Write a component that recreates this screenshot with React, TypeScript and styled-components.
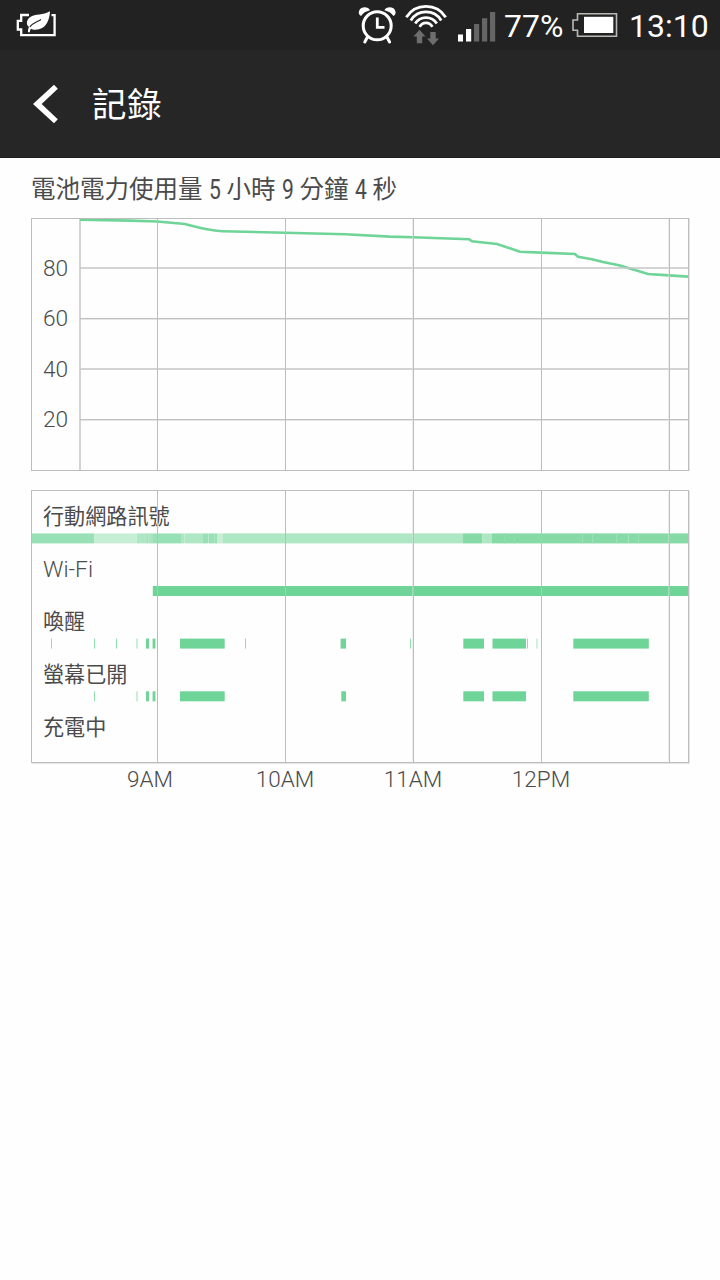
import React from 'react';
import styled, { createGlobalStyle } from 'styled-components';

const GlobalStyle = createGlobalStyle`
  * { box-sizing: border-box; }
  body { margin: 0; background: #fefefe; }
`;

const GREEN = '#6fd497';
const LINE = '#bdbdbd';
const SOFT = '#e4e4e4';

const Screen = styled.div`
  width: 720px;
  height: 1280px;
  display: flex;
  flex-direction: column;
  overflow: hidden;
  background: #fefefe;
  font-family: Roboto, 'Noto Sans CJK TC', sans-serif;
  color: #4b4b4b;
`;

const StatusBar = styled.header`
  height: 50px;
  flex: none;
  display: flex;
  align-items: center;
  padding: 0 13px 0 16px;
  background: #222;
  color: #fff;
`;

const StatusIcon = styled.svg<{ $gap?: number }>`
  display: block;
  flex: none;
  height: 50px;
  margin-right: ${(p) => p.$gap ?? 0}px;
`;

const Spacer = styled.div`
  flex: 1;
`;

const StatusText = styled.span<{ $width: number }>`
  width: ${(p) => p.$width}px;
  font-size: 32px;
  font-weight: 380;
  line-height: 50px;
  padding-top: 1px;
  white-space: nowrap;
`;

const TitleBar = styled.div`
  height: 108px;
  flex: none;
  display: flex;
  align-items: center;
  padding-left: 32px;
  background: #262626;
  border-bottom: 1px solid #1f1f1f;
  color: #fff;
`;

const BackIcon = styled.svg`
  display: block;
  margin-top: 1px;
`;

const PageTitle = styled.h1`
  margin: 3px 0 0 33px;
  font-size: 34.5px;
  font-weight: 400;
  line-height: 50px;
  letter-spacing: 0.8px;
`;

const Content = styled.main`
  display: flex;
  flex-direction: column;
  padding: 14px 30px 0 31px;
`;

const Summary = styled.h2`
  display: flex;
  margin: 0;
  height: 46px;
  font-size: 24.5px;
  font-weight: 400;
  line-height: 36px;
  white-space: nowrap;
`;

const Narrow = styled.span`
  width: 24px;
  display: flex;
  justify-content: center;
  font-size: 27px;
  transform: scaleX(0.78);
`;

const LevelPanel = styled.section`
  display: flex;
  height: 253px;
`;

const LevelAxis = styled.div`
  width: 48px;
  flex: none;
  display: flex;
  flex-direction: column;
  padding: 25px 0 0 11px;
  border: 1px solid ${LINE};
  border-right: 0;
`;

const AxisLabel = styled.span`
  height: 50.3px;
  line-height: 50px;
  font-size: 22.7px;
  font-weight: 300;
`;

const Plot = styled.svg`
  display: block;
  flex: none;
`;

const HistoryPanel = styled.section`
  position: relative;
  width: 658px;
  height: 273px;
  margin-top: 19px;
  padding: 10px 0 0 1px;
  border: 1px solid ${LINE};
  border-left-width: 0;
  box-shadow: 1px 1px 0 ${SOFT};
`;

const HistoryRow = styled.div<{ $height: number }>`
  height: ${(p) => p.$height}px;
`;

const RowLabel = styled.div<{ $latin?: boolean }>`
  height: 32px;
  padding-left: 11px;
  line-height: 31px;
  font-size: ${(p) => (p.$latin ? 22.8 : 21.1)}px;
  font-weight: ${(p) => (p.$latin ? 300 : 400)};
  white-space: nowrap;
`;

const Track = styled.svg`
  display: block;
`;

const GridOverlay = styled.svg`
  position: absolute;
  left: 0;
  top: -1px;
`;

const HourRow = styled.div`
  display: flex;
  padding-left: 55px;
`;

const HourLabel = styled.span`
  width: 128px;
  text-align: center;
  font-size: 22.5px;
  font-weight: 300;
  line-height: 32px;
  &:first-child { margin-right: 7px; }
`;

type Segment = [from: number, to: number, color?: string];

const signal: Segment[] = [
  [31, 94, '#98e0b5'], [94, 136.5, '#c5eed5'], [136.5, 147, '#aee7c4'], [147, 148.5, '#98e0b5'],
  [148.5, 153, '#a8e4bf'], [153, 181, '#98e0b5'], [181, 184, '#aee7c4'], [184, 185, '#c5eed5'],
  [185, 203, '#aee7c4'], [203, 208, '#98e0b5'], [208, 209, '#b9eacb'], [209, 214, '#98e0b5'],
  [214, 215, '#aee7c4'], [215, 217, '#98e0b5'], [217, 223, '#c5eed5'], [223, 463, '#aee7c4'],
  [463, 482.5, '#85daa6'], [482.5, 492, '#aee7c4'], [492, 688, '#85daa6'],
  [504, 505, '#90ddae'], [514, 515, '#90ddae'], [582, 583, '#98e0b5'], [592, 593, '#98e0b5'],
  [616, 617, '#98e0b5'], [628, 629, '#a4e4bd'], [638, 639, '#98e0b5'],
];

const wifi: Segment[] = [[152.8, 688]];

const awake: Segment[] = [
  [51, 52, '#92dfb0'], [94, 95, '#92dfb0'], [116, 117, '#92dfb0'], [136, 138, '#c9efd7'],
  [146, 149], [152.6, 155.4], [180, 224.7], [245, 246, '#92dfb0'], [340.6, 346],
  [410, 411, '#92dfb0'], [463.3, 484], [492.5, 526], [527, 528, '#92dfb0'],
  [536, 538, '#d0f1dc'], [573.3, 648.8],
];

const screenOn: Segment[] = [
  [94, 95, '#92dfb0'], [136, 138, '#c9efd7'], [146, 149], [152.6, 155.4], [180, 224.7],
  [341.3, 346], [463.3, 484], [492.5, 526], [573.3, 648.8],
];

const rows: { label: string; latin?: boolean; segments: Segment[]; height: number; offset: number }[] = [
  { label: '行動網路訊號', segments: signal, height: 53, offset: 0.4 },
  { label: 'Wi-Fi', latin: true, segments: wifi, height: 52, offset: 0 },
  { label: '喚醒', segments: awake, height: 53, offset: 0.6 },
  { label: '螢幕已開', segments: screenOn, height: 53, offset: 0.3 },
  { label: '充電中', segments: [], height: 50, offset: 0 },
];

const hourLines: [x: number, soft: number][] = [[157, 0], [285, 0], [413, -1], [541, 0], [669, -1]];

function HourLines({ height }: { height: number }) {
  return (
    <>
      {hourLines.map(([x, soft]) => (
        <g key={x}>
          {soft !== 0 && <rect x={x + soft} width="1" height={height} fill="#ddd" opacity=".5" />}
          <rect x={x} width="1" height={height} fill={LINE} />
        </g>
      ))}
    </>
  );
}

function EcoBatteryIcon() {
  return (
    <StatusIcon width="42" viewBox="16 0 42 50">
      <path d="M29 15H21.200V20.800H17.800V29.500H21.200V35.200H54.600V15.200H51.500" fill="none" stroke="#fff" strokeWidth="2.300" />
      <path d="M50 11.300C49.500 20 46.500 27.500 39 29.300C35 30.300 32.500 29.500 31 28.700C30.200 29.700 29.900 31 29.800 32.300H28C27.900 30 28.200 28.500 29 27C26 25 26.200 20 30 17.300C35.500 13.500 43 15.500 50 11.300Z" fill="#fff" />
      <path d="M29.800 27C32.500 23 37 22 41 19.500" fill="none" stroke="#222" strokeWidth="1.100" />
    </StatusIcon>
  );
}

function AlarmIcon() {
  return (
    <StatusIcon width="38" viewBox="358 0 38 50" $gap={9}>
      <path d="M361 16C357.500 14.500 358.500 9.500 361.500 8C364.500 6.500 369 7.500 370 10.300C366 11.300 363 13 361 16ZM393.400 16C396.900 14.500 395.900 9.500 392.900 8C389.900 6.500 385.400 7.500 384.400 10.300C388.400 11.300 391.400 13 393.400 16Z" fill="#fff" />
      <circle cx="377.200" cy="25.800" r="14" fill="none" stroke="#fff" strokeWidth="3" />
      <path d="M377.300 17.500V27.300H384.500" fill="none" stroke="#fff" strokeWidth="2.800" />
      <path d="M367.200 37.500L364.800 42M387.200 37.500L389.600 42" stroke="#fff" strokeWidth="3" strokeLinecap="round" />
    </StatusIcon>
  );
}

function WifiIcon() {
  return (
    <StatusIcon width="42" viewBox="405 0 42 50" $gap={11}>
      <g fill="none" stroke="#fff" strokeWidth="2.800">
        <path d="M406.300 17.200A23.300 23.300 0 0 1 445.700 17.200" />
        <path d="M410.800 20.400A17.800 17.800 0 0 1 441.200 20.400" />
        <path d="M415.200 23.600A12.700 12.700 0 0 1 436.800 23.600" />
        <path d="M419.700 26.900A7 7 0 0 1 432.300 26.900" />
      </g>
      <path d="M419.500 29.800L425.500 36.500H422.200V43.200H416.800V36.500H413.500ZM433 45.200L427 38.500H430.300V32H435.700V38.500H439Z" fill="#6d6d6d" />
    </StatusIcon>
  );
}

function SignalIcon() {
  return (
    <StatusIcon width="38" viewBox="458 0 38 50" $gap={8}>
      <path d="M458 34.500H463V41.500H458ZM466 29H471.200V41.500H466Z" fill="#fff" />
      <path d="M474 24H479.200V41.500H474ZM482 18.300H487.200V41.500H482ZM490 12H495.200V41.500H490Z" fill="#666" />
    </StatusIcon>
  );
}

function BatteryIcon() {
  return (
    <StatusIcon width="46" viewBox="572 0 46 50" $gap={11}>
      <path d="M577.500 13.700H616.500V36.300H577.500V30.300H573V20H577.500Z" fill="none" stroke="#b9bab6" strokeWidth="1.600" />
      <rect x="584" y="16.800" width="29.300" height="16.200" fill="#fff" />
    </StatusIcon>
  );
}

function LevelChart() {
  return (
    <Plot width="611" height="254" viewBox="79 218 611 254">
      <rect x="79" y="218" width="2" height="253" fill="#d3d3d3" />
      <path
        d="M80 219.800L130 220.600L157 221.500L185 224C196 227 207 230.500 222 231.200L285 232.800L345 234.200L390 236.600L413 237.300L469 239.200L472 241.200L497 244L520 251.800L541 252.600L575 254L578 256.800L592 259.200L603 262L620 265.400L648 274L669 275.400L688 276.600"
        fill="none"
        stroke={GREEN}
        strokeWidth="2.600"
      />
      {[267, 368].map((y) => <rect key={y} x="80" y={y} width="609" height="2" fill="#c6c6c6" opacity=".75" />)}
      {[318, 419].map((y) => <rect key={y} x="80" y={y} width="609" height="1.400" fill="#c0c0c0" />)}
      <g transform="translate(0 218)"><HourLines height={253} /></g>
      <rect x="79" y="218" width="610" height="1" fill={LINE} />
      <rect x="79" y="470" width="610" height="1" fill={LINE} />
      <rect x="688" y="218" width="1" height="253" fill={LINE} />
      <rect x="689" y="218" width="1" height="253" fill={SOFT} />
    </Plot>
  );
}

export default function App() {
  return (
    <Screen>
      <GlobalStyle />
      <StatusBar>
        <EcoBatteryIcon />
        <Spacer />
        <AlarmIcon />
        <WifiIcon />
        <SignalIcon />
        <StatusText $width={68}>77%</StatusText>
        <BatteryIcon />
        <StatusText $width={78}>13:10</StatusText>
      </StatusBar>
      <TitleBar>
        <BackIcon width="27" height="40" viewBox="32 84 27 40">
          <path d="M33 104L54 84.800L57.800 88.800L41.600 104L57.800 119.200L54 123.200Z" fill="#fff" />
        </BackIcon>
        <PageTitle>記錄</PageTitle>
      </TitleBar>
      <Content>
        <Summary>
          電池電力使用量<Narrow>5</Narrow>小時<Narrow>9</Narrow>分鐘<Narrow>4</Narrow>秒
        </Summary>
        <LevelPanel>
          <LevelAxis>
            {[80, 60, 40, 20].map((n) => <AxisLabel key={n}>{n}</AxisLabel>)}
          </LevelAxis>
          <LevelChart />
        </LevelPanel>
        <HistoryPanel>
          {rows.map((row) => (
            <HistoryRow key={row.label} $height={row.height}>
              <RowLabel $latin={row.latin}>{row.label}</RowLabel>
              <Track width="657" height="12" viewBox="32 0 657 12">
                {row.segments.map(([from, to, color], i) => (
                  <rect key={i} x={from} y={row.offset} width={to - from} height="10" fill={color ?? GREEN} />
                ))}
              </Track>
            </HistoryRow>
          ))}
          <GridOverlay width="658" height="273" viewBox="31 0 658 273">
            <rect x="31" width="1" height="273" fill={LINE} />
            <HourLines height={273} />
          </GridOverlay>
        </HistoryPanel>
        <HourRow>
          {['9AM', '10AM', '11AM', '12PM'].map((h) => <HourLabel key={h}>{h}</HourLabel>)}
        </HourRow>
      </Content>
    </Screen>
  );
}
